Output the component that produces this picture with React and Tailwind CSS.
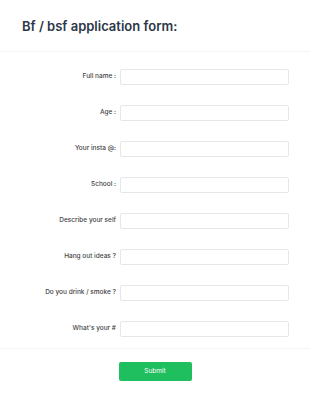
const fields = [
  'Full name :',
  'Age :',
  'Your insta @:',
  'School :',
  'Describe your self',
  'Hang out ideas ?',
  'Do you drink / smoke ?',
  "What's your #",
];

export default function App() {
  return (
    <div className="min-h-[398px] bg-white" style={{ fontFamily: 'Inter, "Liberation Sans", sans-serif' }}>
      <header className="h-[52px] border-b border-gray-100 px-[22px] pt-[17px]">
        <h1 className="text-[13px] font-semibold leading-[18px] text-[#2d3748]">Bf / bsf application form:</h1>
      </header>

      <form className="pt-[17px]">
        <div className="flex flex-col gap-[20px]">
          {fields.map((label) => (
            <div key={label} className="flex items-center">
              <label className="w-[120px] pr-[4px] text-right text-[6.5px] font-medium text-[#3f3f46]">{label}</label>
              <input
                type="text"
                className="h-[16px] w-[169px] rounded-[2px] border border-gray-200 bg-white outline-none"
              />
            </div>
          ))}
        </div>

        <div className="mt-[11px] flex justify-center border-t border-gray-100 pt-[13px]">
          <button
            type="button"
            className="h-[19px] w-[73px] rounded-[2px] bg-[#1fbe5e] text-[6.5px] text-white"
          >
            Submit
          </button>
        </div>
      </form>
    </div>
  );
}
